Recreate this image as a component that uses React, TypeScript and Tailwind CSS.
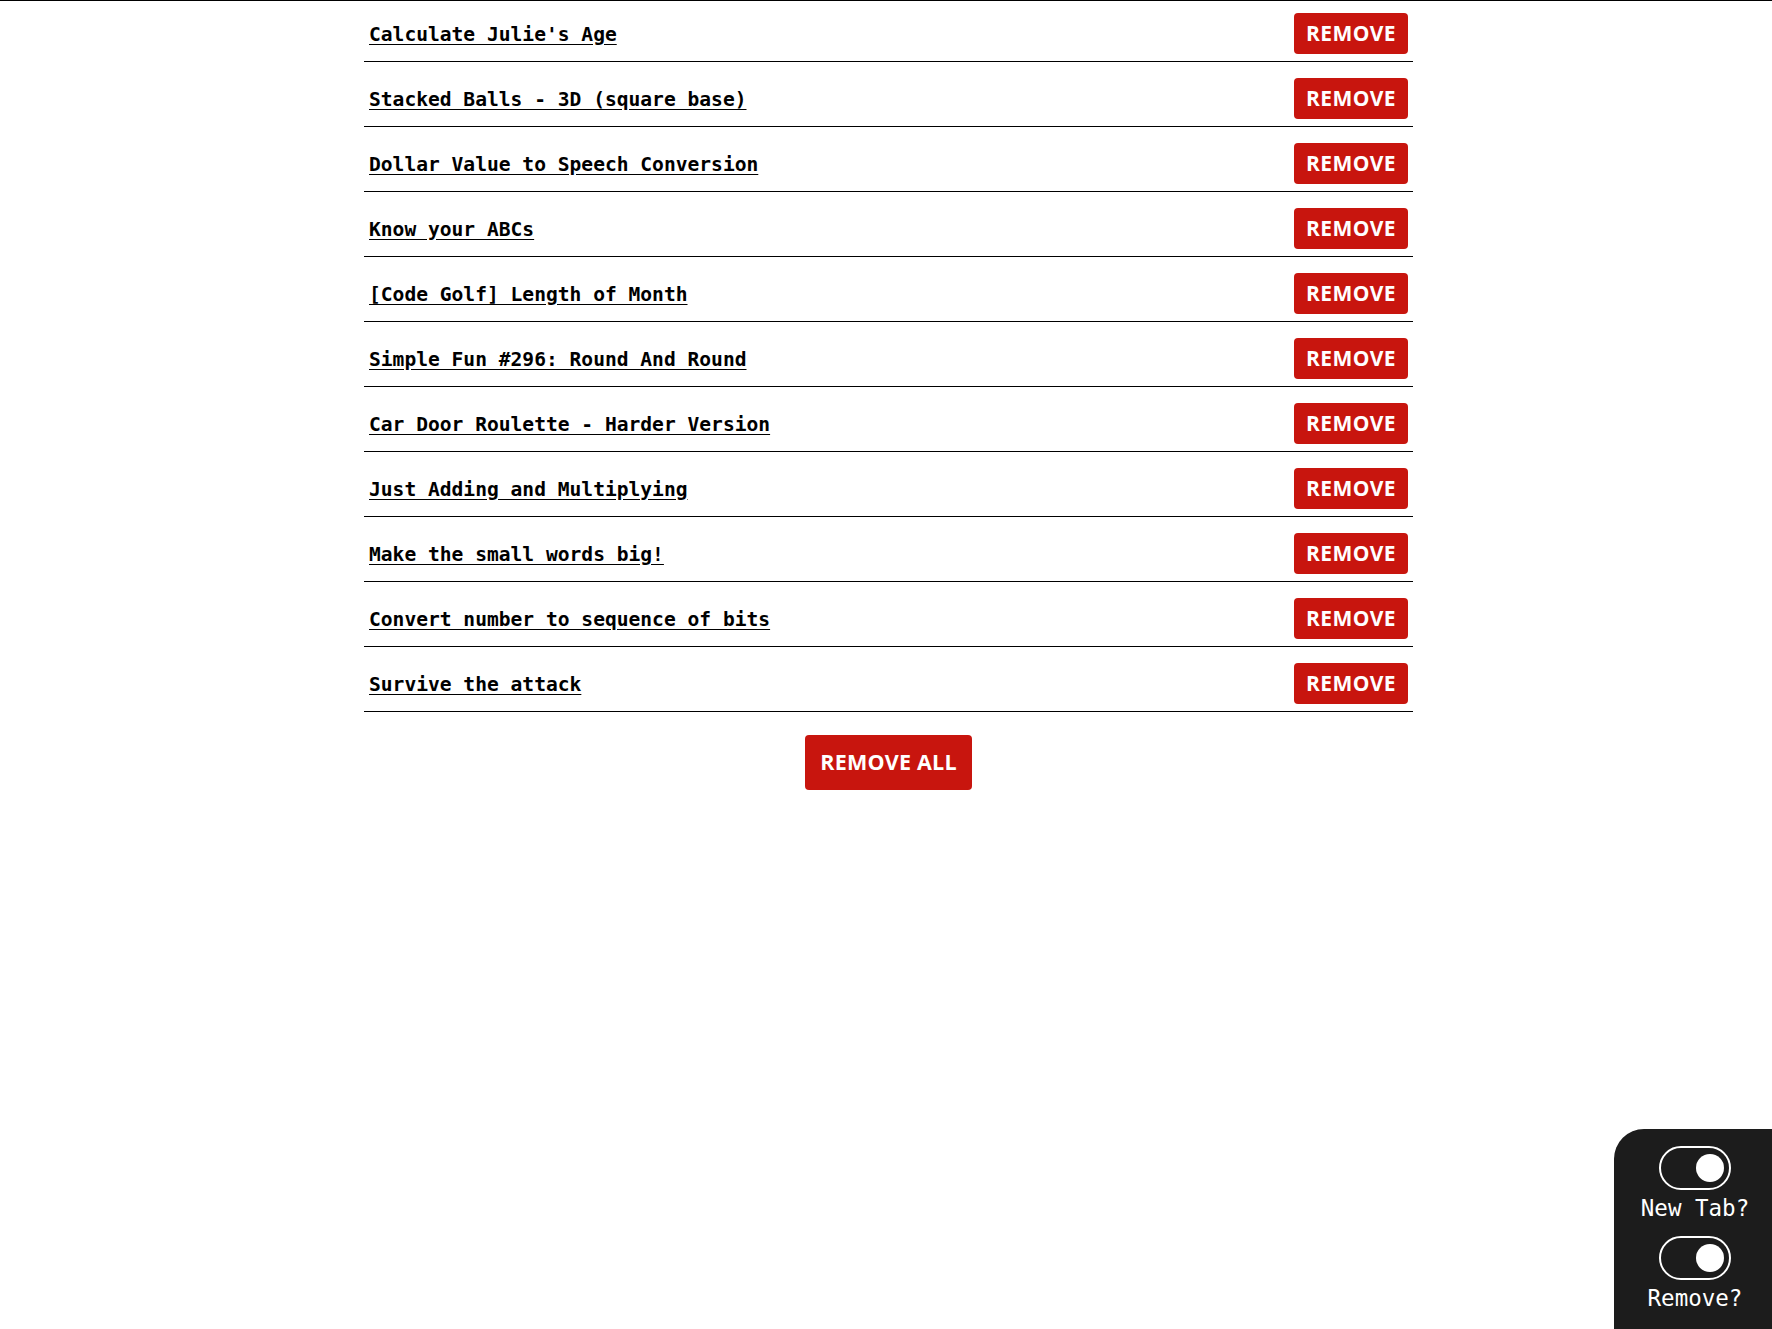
import React from 'react';

const katas = [
  'Calculate Julie\'s Age',
  'Stacked Balls - 3D (square base)',
  'Dollar Value to Speech Conversion',
  'Know your ABCs',
  '[Code Golf] Length of Month',
  'Simple Fun #296: Round And Round',
  'Car Door Roulette - Harder Version',
  'Just Adding and Multiplying',
  'Make the small words big!',
  'Convert number to sequence of bits',
  'Survive the attack',
];

const mono = 'font-["DejaVu_Sans_Mono","Liberation_Mono",monospace]';
const sans = 'font-["Open_Sans","Noto_Sans",sans-serif]';

// ── Toggle (display only) ─────────────────────────────────

function Toggle({ label }: { label: string }) {
  return (
    <div className="flex flex-col items-center">
      <div className="flex h-[44px] w-[72px] items-center justify-end rounded-full border-[2.5px] border-white pr-[5px]">
        <span className="block h-[28px] w-[28px] rounded-full bg-white" />
      </div>
      <span className={`${mono} mt-[6px] text-[22.5px] leading-[25px] text-white`}>{label}</span>
    </div>
  );
}

export default function App() {
  return (
    <div className="min-h-[1329px] border-t border-black bg-white">
      <ul className="ml-[364px] w-[1049px]">
        {katas.map((name, i) => (
          <li
            key={name}
            className={[
              'flex items-center justify-between border-b border-black px-[5px] pb-[7px]',
              i === 0 ? 'pt-[12px]' : 'pt-[16px]',
            ].join(' ')}
          >
            <a
              href="#"
              className={`${mono} mt-[2px] text-[19.6px] font-bold leading-none text-black underline underline-offset-[3px]`}
            >
              {name}
            </a>
            <button
              className={`${sans} h-[41px] w-[114px] rounded-[4px] bg-[#c8150e] text-[21px] font-bold tracking-[0.02em] text-white`}
            >
              REMOVE
            </button>
          </li>
        ))}
      </ul>

      <div className="ml-[364px] flex w-[1049px] justify-center pt-[23px]">
        <button
          className={`${sans} h-[55px] w-[167px] rounded-[4px] bg-[#c8150e] text-[21.5px] font-bold tracking-[0.01em] text-white`}
        >
          REMOVE ALL
        </button>
      </div>

      {/* Settings panel pinned to the bottom-right corner */}
      <div className="fixed bottom-0 right-0 flex h-[200px] w-[158px] flex-col items-center gap-[15px] rounded-tl-[30px] bg-[#1c1c1c] pl-[4px] pt-[17px]">
        <Toggle label="New Tab?" />
        <Toggle label="Remove?" />
      </div>
    </div>
  );
}
